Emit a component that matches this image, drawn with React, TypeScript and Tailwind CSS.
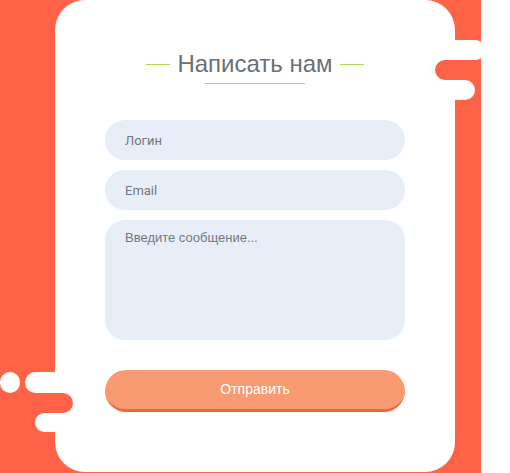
import React from "react";

export default function App() {
  return (
    <div className="flex w-[510px] h-[473px] bg-white font-['Liberation_Sans',Arial,sans-serif]">
      <div className="relative w-[481px] h-[473px] bg-[#fe6347] overflow-hidden">
        <div className="ml-[55px] w-[400px] h-[472px] bg-white rounded-[30px] flex flex-col items-center">
          <div className="pt-[50px] flex items-center gap-[7px]">
            <div className="w-[24px] h-px bg-[#a8dc5a]" />
            <h1 className="text-[24px] leading-[28px] text-[#6b7075]">Написать нам</h1>
            <div className="w-[24px] h-px bg-[#a8dc5a]" />
          </div>
          <div className="mt-[5px] w-[100px] h-px bg-[#b9bcbf]" />
          <form className="mt-[36px] flex flex-col gap-[10px] w-[300px]">
            <input
              placeholder="Логин"
              className="h-[40px] w-full rounded-full bg-[#e8eef7] pl-[20px] text-[13px] font-['Roboto',sans-serif] text-[#6f7378] placeholder:text-[#75797e] outline-none"
            />
            <input
              placeholder="Email"
              className="h-[40px] w-full rounded-full bg-[#e8eef7] pl-[20px] text-[13px] font-['Roboto',sans-serif] text-[#6f7378] placeholder:text-[#75797e] outline-none"
            />
            <textarea
              placeholder="Введите сообщение..."
              className="h-[120px] w-full resize-none rounded-[20px] bg-[#e8eef7] px-[20px] pt-[10px] text-[13px] leading-[15px] text-[#6f7378] placeholder:text-[#75797e] outline-none"
            />
            <button
              type="button"
              className="mt-[20px] h-[42px] w-full rounded-full bg-[#f89b72] border-b-[3px] border-[#f0663f] text-[14px] text-white"
            >
              Отправить
            </button>
          </form>
        </div>

        {/* right decorations */}
        <div className="absolute left-[440px] top-[40px] w-[45px] h-[20px] rounded-full bg-white" />
        <div className="absolute left-[435px] top-[60px] w-[60px] h-[20px] rounded-full bg-[#fe6347]" />
        <div className="absolute left-[440px] top-[80px] w-[35px] h-[20px] rounded-full bg-white" />

        {/* left decorations */}
        <div className="absolute left-0 top-[372px] w-[20px] h-[21px] rounded-full bg-white" />
        <div className="absolute left-[25px] top-[372px] w-[50px] h-[21px] rounded-full bg-white" />
        <div className="absolute left-[-20px] top-[393px] w-[93px] h-[20px] rounded-full bg-[#fe6347]" />
        <div className="absolute left-[35px] top-[413px] w-[45px] h-[19px] rounded-full bg-white" />
      </div>
      <div className="w-[29px] h-[473px] bg-white" />
    </div>
  );
}
